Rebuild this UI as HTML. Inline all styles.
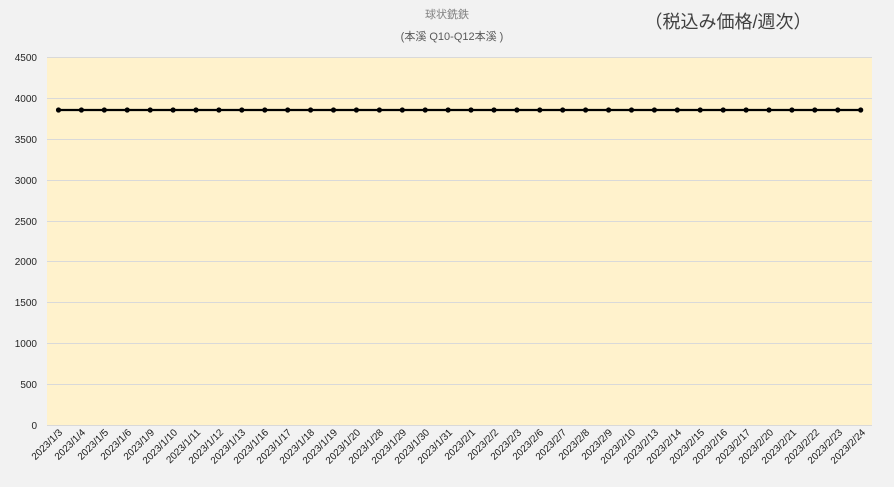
<!DOCTYPE html>
<html><head><meta charset="utf-8"><style>
html,body{margin:0;padding:0;background:#f2f2f2;}
svg{display:block;font-family:"Liberation Sans","Noto Sans CJK JP",sans-serif;}
</style></head><body>
<svg width="894" height="487" viewBox="0 0 894 487" xmlns="http://www.w3.org/2000/svg">
<rect width="894" height="487" fill="#f2f2f2"/>
<rect x="47" y="57" width="825" height="368" fill="#fff2cc"/>
<g stroke="#d9d9d9" stroke-width="1">
<line x1="47" x2="872" y1="57.5" y2="57.5"/>
<line x1="47" x2="872" y1="98.5" y2="98.5"/>
<line x1="47" x2="872" y1="139.5" y2="139.5"/>
<line x1="47" x2="872" y1="180.5" y2="180.5"/>
<line x1="47" x2="872" y1="221.5" y2="221.5"/>
<line x1="47" x2="872" y1="261.5" y2="261.5"/>
<line x1="47" x2="872" y1="302.5" y2="302.5"/>
<line x1="47" x2="872" y1="343.5" y2="343.5"/>
<line x1="47" x2="872" y1="384.5" y2="384.5"/>
<line x1="47" x2="872" y1="425.5" y2="425.5"/>
</g>
<g font-size="10" fill="#262626" text-anchor="end">
<text x="37" y="61">4500</text>
<text x="37" y="102">4000</text>
<text x="37" y="143">3500</text>
<text x="37" y="184">3000</text>
<text x="37" y="225">2500</text>
<text x="37" y="265">2000</text>
<text x="37" y="306">1500</text>
<text x="37" y="347">1000</text>
<text x="37" y="388">500</text>
<text x="37" y="429">0</text>
</g>
<text x="447" y="18" font-size="11" fill="#808080" text-anchor="middle">球状銑鉄</text>
<text x="452" y="40" font-size="11" fill="#595959" text-anchor="middle">(本溪 Q10-Q12本溪 )</text>
<text x="728" y="28" font-size="18" fill="#404040" text-anchor="middle">（税込み価格/週次）</text>
<polyline fill="none" stroke="#000" stroke-width="2.2" points="58.5,110 860.7,110"/>
<g fill="#000">
<circle cx="58.5" cy="110" r="2.6"/><circle cx="81.4" cy="110" r="2.6"/><circle cx="104.3" cy="110" r="2.6"/><circle cx="127.2" cy="110" r="2.6"/><circle cx="150.2" cy="110" r="2.6"/><circle cx="173.1" cy="110" r="2.6"/><circle cx="196" cy="110" r="2.6"/><circle cx="218.9" cy="110" r="2.6"/><circle cx="241.8" cy="110" r="2.6"/><circle cx="264.8" cy="110" r="2.6"/><circle cx="287.7" cy="110" r="2.6"/><circle cx="310.6" cy="110" r="2.6"/><circle cx="333.5" cy="110" r="2.6"/><circle cx="356.4" cy="110" r="2.6"/><circle cx="379.4" cy="110" r="2.6"/><circle cx="402.3" cy="110" r="2.6"/><circle cx="425.2" cy="110" r="2.6"/><circle cx="448.1" cy="110" r="2.6"/><circle cx="471" cy="110" r="2.6"/><circle cx="494" cy="110" r="2.6"/><circle cx="516.9" cy="110" r="2.6"/><circle cx="539.8" cy="110" r="2.6"/><circle cx="562.7" cy="110" r="2.6"/><circle cx="585.6" cy="110" r="2.6"/><circle cx="608.6" cy="110" r="2.6"/><circle cx="631.5" cy="110" r="2.6"/><circle cx="654.4" cy="110" r="2.6"/><circle cx="677.3" cy="110" r="2.6"/><circle cx="700.2" cy="110" r="2.6"/><circle cx="723.2" cy="110" r="2.6"/><circle cx="746.1" cy="110" r="2.6"/><circle cx="769" cy="110" r="2.6"/><circle cx="791.9" cy="110" r="2.6"/><circle cx="814.8" cy="110" r="2.6"/><circle cx="837.8" cy="110" r="2.6"/><circle cx="860.7" cy="110" r="2.6"/>
</g>
<g font-size="10" fill="#1a1a1a" text-anchor="end">
<text transform="translate(63,433) rotate(-45)">2023/1/3</text>
<text transform="translate(86,433) rotate(-45)">2023/1/4</text>
<text transform="translate(109,433) rotate(-45)">2023/1/5</text>
<text transform="translate(132,433) rotate(-45)">2023/1/6</text>
<text transform="translate(155,433) rotate(-45)">2023/1/9</text>
<text transform="translate(178,433) rotate(-45)">2023/1/10</text>
<text transform="translate(201,433) rotate(-45)">2023/1/11</text>
<text transform="translate(224,433) rotate(-45)">2023/1/12</text>
<text transform="translate(246,433) rotate(-45)">2023/1/13</text>
<text transform="translate(269,433) rotate(-45)">2023/1/16</text>
<text transform="translate(292,433) rotate(-45)">2023/1/17</text>
<text transform="translate(315,433) rotate(-45)">2023/1/18</text>
<text transform="translate(338,433) rotate(-45)">2023/1/19</text>
<text transform="translate(361,433) rotate(-45)">2023/1/20</text>
<text transform="translate(384,433) rotate(-45)">2023/1/28</text>
<text transform="translate(407,433) rotate(-45)">2023/1/29</text>
<text transform="translate(430,433) rotate(-45)">2023/1/30</text>
<text transform="translate(453,433) rotate(-45)">2023/1/31</text>
<text transform="translate(476,433) rotate(-45)">2023/2/1</text>
<text transform="translate(499,433) rotate(-45)">2023/2/2</text>
<text transform="translate(522,433) rotate(-45)">2023/2/3</text>
<text transform="translate(544,433) rotate(-45)">2023/2/6</text>
<text transform="translate(567,433) rotate(-45)">2023/2/7</text>
<text transform="translate(590,433) rotate(-45)">2023/2/8</text>
<text transform="translate(613,433) rotate(-45)">2023/2/9</text>
<text transform="translate(636,433) rotate(-45)">2023/2/10</text>
<text transform="translate(659,433) rotate(-45)">2023/2/13</text>
<text transform="translate(682,433) rotate(-45)">2023/2/14</text>
<text transform="translate(705,433) rotate(-45)">2023/2/15</text>
<text transform="translate(728,433) rotate(-45)">2023/2/16</text>
<text transform="translate(751,433) rotate(-45)">2023/2/17</text>
<text transform="translate(774,433) rotate(-45)">2023/2/20</text>
<text transform="translate(797,433) rotate(-45)">2023/2/21</text>
<text transform="translate(820,433) rotate(-45)">2023/2/22</text>
<text transform="translate(843,433) rotate(-45)">2023/2/23</text>
<text transform="translate(866,433) rotate(-45)">2023/2/24</text>
</g>
</svg>
</body></html>
